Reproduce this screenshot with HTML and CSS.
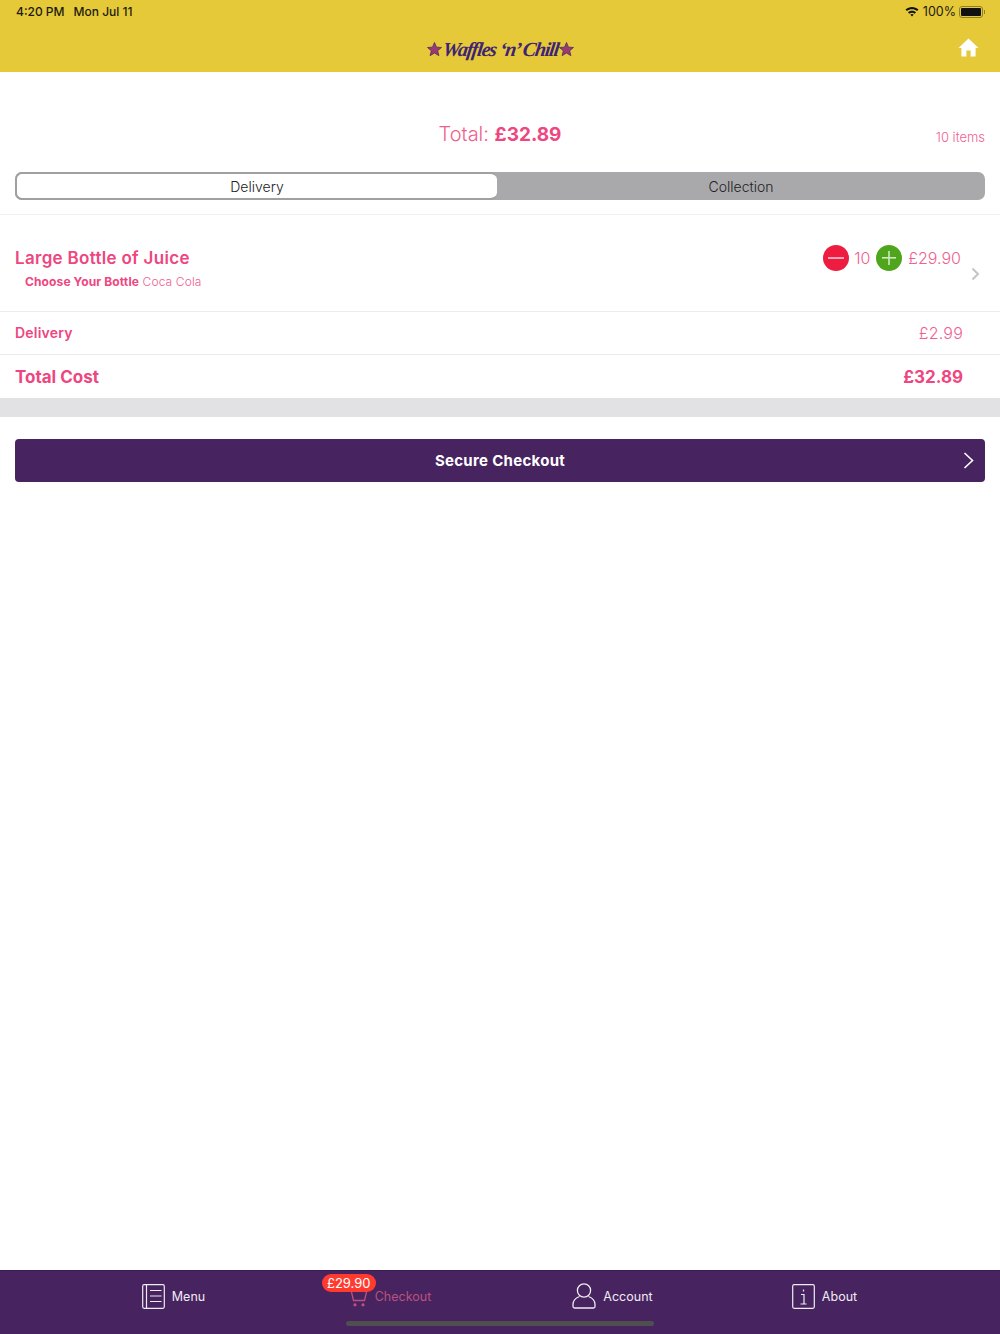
FILE: index.html
```html
<!DOCTYPE html>
<html>
	<head>
		<meta charset="utf-8">
		<title>Checkout</title>
		<link rel="stylesheet" href="styles.css">
	</head>
	<body>
		<div class="page">
			<header class="top">
				<div class="status">
					<div class="status-left">
						<span>4:20 PM</span>
						<span>Mon Jul 11</span>
					</div>
					<div class="status-right">
						<svg class="wifi" width="14" height="11" viewBox="0 0 14 11">
							<path d="M0.5 3.6C4.2 0.2 9.8 0.2 13.5 3.6L12.1 5.1C9.2 2.5 4.8 2.5 1.9 5.1Z" fill="#111"/>
							<path d="M3 6.2C5.3 4.2 8.7 4.2 11 6.2L9.6 7.7C8.1 6.4 5.9 6.4 4.4 7.7Z" fill="#111"/>
							<path d="M5.3 8.5C6.3 7.7 7.7 7.7 8.7 8.5L7 10.5Z" fill="#111"/>
						</svg>
						<span>100%</span>
						<div class="battery"><div class="battery-fill"></div></div>
						<div class="battery-cap"></div>
					</div>
				</div>
				<div class="brand-row">
					<div class="brand">
						<svg width="15" height="14" viewBox="0 0 16 15"><polygon points="8,0.5 10.1,5.5 15.5,5.9 11.4,9.4 12.7,14.6 8,11.8 3.3,14.6 4.6,9.4 0.5,5.9 5.9,5.5" fill="#9b3a72" stroke="#4a2464" stroke-width="0.8"/></svg>
						<span class="brand-name">Waffles ‘n’ Chill</span>
						<svg width="15" height="14" viewBox="0 0 16 15"><polygon points="8,0.5 10.1,5.5 15.5,5.9 11.4,9.4 12.7,14.6 8,11.8 3.3,14.6 4.6,9.4 0.5,5.9 5.9,5.5" fill="#9b3a72" stroke="#4a2464" stroke-width="0.8"/></svg>
					</div>
					<svg class="home" width="21" height="19" viewBox="0 0 21 19">
						<path d="M10.5 0.5L20.5 10H17.6V18.5H12.6V12.5H8.4V18.5H3.4V10H0.5Z" fill="#fff"/>
					</svg>
				</div>
			</header>

			<main class="content">
				<div class="summary">
					<div class="summary-total">Total: <b>£32.89</b></div>
					<div class="summary-items">10 items</div>
				</div>

				<div class="segment">
					<div class="segment-tab current">Delivery</div>
					<div class="segment-tab">Collection</div>
				</div>

				<div class="item">
					<div class="item-info">
						<div class="item-name">Large Bottle of Juice</div>
						<div class="item-option"><b>Choose Your Bottle</b> Coca Cola</div>
					</div>
					<div class="item-side">
						<div class="item-controls">
							<svg width="26" height="26" viewBox="0 0 26 26"><circle cx="13" cy="13" r="13" fill="#ee1c41"/><rect x="5" y="12" width="16" height="2" fill="#f8a5b5"/></svg>
							<span class="item-qty">10</span>
							<svg width="26" height="26" viewBox="0 0 26 26"><circle cx="13" cy="13" r="13" fill="#4fa61c"/><rect x="6" y="12" width="14" height="1.6" fill="#cfe8bd"/><rect x="12.2" y="6" width="1.6" height="14" fill="#cfe8bd"/></svg>
							<span class="item-price">£29.90</span>
						</div>
						<svg class="item-arrow" width="9" height="14" viewBox="0 0 9 14"><path d="M1.5 1.5L7 7L1.5 12.5" fill="none" stroke="#c4c4c6" stroke-width="2"/></svg>
					</div>
				</div>

				<div class="row row-delivery">
					<div class="row-label">Delivery</div>
					<div class="row-value">£2.99</div>
				</div>
				<div class="row row-total">
					<div class="row-label">Total Cost</div>
					<div class="row-value">£32.89</div>
				</div>
				<div class="band"></div>

				<div class="checkout">
					<span>Secure Checkout</span>
					<svg class="checkout-arrow" width="11" height="17" viewBox="0 0 11 17"><path d="M1.5 1L9.5 8.5L1.5 16" fill="none" stroke="#fff" stroke-width="1.6"/></svg>
				</div>
			</main>

			<nav class="tabs">
				<div class="tab">
					<svg width="23" height="25" viewBox="0 0 23 25" fill="none" stroke="#f0ecf3" stroke-width="1.2">
						<rect x="0.7" y="0.7" width="21.6" height="23.6" rx="1.5"/>
						<path d="M4.5 1V24M8 6.5H19.5M8 12H19.5M8 17.5H19.5"/>
					</svg>
					<span>Menu</span>
				</div>
				<div class="tab tab-active">
					<svg class="cart" width="18" height="18" viewBox="0 0 18 18" fill="none" stroke="#b9527f" stroke-width="1.3">
						<path d="M1 1H17L14.5 11.5H3.5Z"/>
						<circle cx="5" cy="15.8" r="1" fill="#b9527f"/>
						<circle cx="13" cy="15.8" r="1" fill="#b9527f"/>
					</svg>
					<span>Checkout</span>
					<div class="badge">£29.90</div>
				</div>
				<div class="tab tab-account">
					<svg width="24" height="26" viewBox="0 0 24 26" fill="none" stroke="#f0ecf3" stroke-width="1.3">
						<circle cx="12" cy="7.5" r="6.6"/>
						<path d="M7.5 13.5C3.5 15 1 18 1 21.5V23.5C1 24.5 1.5 25 2.5 25H21.5C22.5 25 23 24.5 23 23.5V21.5C23 18 20.5 15 16.5 13.5"/>
					</svg>
					<span>Account</span>
				</div>
				<div class="tab">
					<svg width="23" height="25" viewBox="0 0 23 25" fill="none" stroke="#f0ecf3" stroke-width="1.2">
						<rect x="0.7" y="0.7" width="21.6" height="23.6" rx="1.5"/>
						<path d="M9 10.5H12V20M8.5 20H14.5M11.5 5.5V7.5"/>
					</svg>
					<span>About</span>
				</div>
				<div class="home-bar"></div>
			</nav>
		</div>
	</body>
</html>
```

FILE: styles.css
```css
*{
	padding: 0;
	margin: 0;
	box-sizing: border-box;
}
html,body{
	width: 100%;
	height: 100%;
}
body{
	font-family: "Inter", "Liberation Sans", sans-serif;
	background-color: #fff;
}
.page{
	display: flex;
	flex-direction: column;
	height: 1334px;
}

/* top bar */
.top{
	height: 72px;
	background-color: #e5c938;
	padding: 0 15px 0 16px;
}
.status{
	display: flex;
	justify-content: space-between;
	align-items: center;
	height: 23px;
	font-size: 12px;
	font-weight: 500;
	color: #1c1a10;
}
.status-left{
	display: flex;
	gap: 9px;
}
.status-right{
	display: flex;
	align-items: center;
	gap: 4px;
	font-size: 12.5px;
	font-weight: 400;
}
.battery{
	width: 24px;
	height: 12px;
	margin-left: -1px;
	border: 1px solid #8d7f2b;
	border-radius: 3px;
	padding: 1px;
}
.battery-fill{
	height: 100%;
	background-color: #111;
	border-radius: 1px;
}
.battery-cap{
	width: 1px;
	height: 4px;
	margin-left: -3px;
	background-color: #8d7f2b;
}
.brand-row{
	position: relative;
	display: flex;
	justify-content: center;
	align-items: center;
	height: 49px;
}
.brand{
	display: flex;
	align-items: center;
	gap: 1px;
	margin-top: 3px;
}
.brand-name{
	font-family: "Liberation Serif", serif;
	font-style: italic;
	font-weight: 700;
	font-size: 20px;
	letter-spacing: -1.2px;
	color: #3f2374;
	white-space: nowrap;
	transform: skewX(-8deg);
}
.home{
	position: absolute;
	right: 6px;
	top: 15px;
}

/* content */
.content{
	flex: 1;
}
.summary{
	position: relative;
	height: 100px;
	padding-top: 50px;
	text-align: center;
	font-size: 20px;
	font-weight: 300;
	color: #f0608f;
}
.summary-total{
	line-height: 24px;
}
.summary-total b{
	font-size: 19px;
	color: #ee4680;
	font-weight: 700;
}
.summary-items{
	position: absolute;
	right: 15px;
	top: 56px;
	font-size: 13px;
	line-height: 18px;
}
.segment{
	display: flex;
	height: 28px;
	margin: 0 15px;
	background-color: #a9a9ab;
	border-radius: 7px;
	font-size: 14px;
	font-weight: 300;
	color: #222;
}
.segment-tab{
	flex: 1;
	display: flex;
	justify-content: center;
	align-items: center;
}
.segment-tab.current{
	flex: 0 0 482px;
	background-color: #fff;
	border: 2px solid #a0a0a2;
	border-right: none;
	border-radius: 7px;
}
.item{
	display: flex;
	justify-content: space-between;
	height: 98px;
	margin-top: 14px;
	padding: 30px 15px 0;
	border-top: 1px solid #f0f0f0;
	border-bottom: 1px solid #ececec;
}
.item-name{
	font-size: 17px;
	font-weight: 600;
	letter-spacing: 0.3px;
	line-height: 26px;
	color: #ee4680;
}
.item-option{
	margin-top: 3px;
	padding-left: 10px;
	font-size: 12px;
	font-weight: 300;
	letter-spacing: 0.12px;
	line-height: 16px;
	color: #f0608f;
}
.item-option b{
	font-weight: 700;
	color: #ee4680;
}
.item-side{
	display: flex;
	align-items: flex-start;
}
.item-controls{
	display: flex;
	align-items: center;
	font-size: 16px;
	font-weight: 300;
	color: #f0608f;
}
.item-qty{
	margin: 0 6px 0 5px;
}
.item-price{
	margin-left: 6px;
}
.item-arrow{
	margin: 22px 5px 0 10px;
}
.row{
	display: flex;
	justify-content: space-between;
	align-items: center;
	padding: 0 37px 0 15px;
	border-bottom: 1px solid #ececec;
	color: #ee4680;
}
.row-delivery{
	height: 43px;
	font-size: 14px;
	letter-spacing: 0.2px;
}
.row-delivery .row-label{
	font-weight: 600;
	margin-top: -1px;
}
.row-delivery .row-value{
	font-size: 16px;
	font-weight: 300;
	color: #f0608f;
}
.row-total{
	height: 43px;
	border-bottom: none;
	font-size: 17px;
	font-weight: 700;
}
.band{
	height: 19px;
	background-color: #e2e2e4;
}
.checkout{
	position: relative;
	display: flex;
	justify-content: center;
	align-items: center;
	height: 43px;
	margin: 22px 15px 0;
	background-color: #47235f;
	border-radius: 4px;
	font-size: 15px;
	font-weight: 700;
	letter-spacing: 0.3px;
	color: #fff;
}
.checkout-arrow{
	position: absolute;
	right: 11px;
	top: 13px;
}

/* bottom tabs */
.tabs{
	position: relative;
	display: flex;
	height: 64px;
	padding: 12px 67px 0 65px;
	background-color: #47235f;
	border-top: 1px solid #3c1c52;
}
.tab{
	position: relative;
	flex: 0 0 217px;
	display: flex;
	justify-content: center;
	align-items: center;
	gap: 7px;
	height: 26px;
	font-size: 12.5px;
	color: #f0ecf3;
}
.tab-active{
	color: #b9527f;
}
.cart{
	margin-top: 4px;
}
.tab-account{
	padding-left: 10px;
}
.badge{
	position: absolute;
	left: 40px;
	top: -9px;
	padding: 0 5px;
	height: 18px;
	line-height: 18px;
	background-color: #ff3b30;
	border-radius: 9px;
	font-size: 13px;
	color: #fff;
}
.home-bar{
	position: absolute;
	left: 346px;
	bottom: 8px;
	width: 308px;
	height: 5px;
	background-color: #4f4f4f;
	border-radius: 3px;
}
```
